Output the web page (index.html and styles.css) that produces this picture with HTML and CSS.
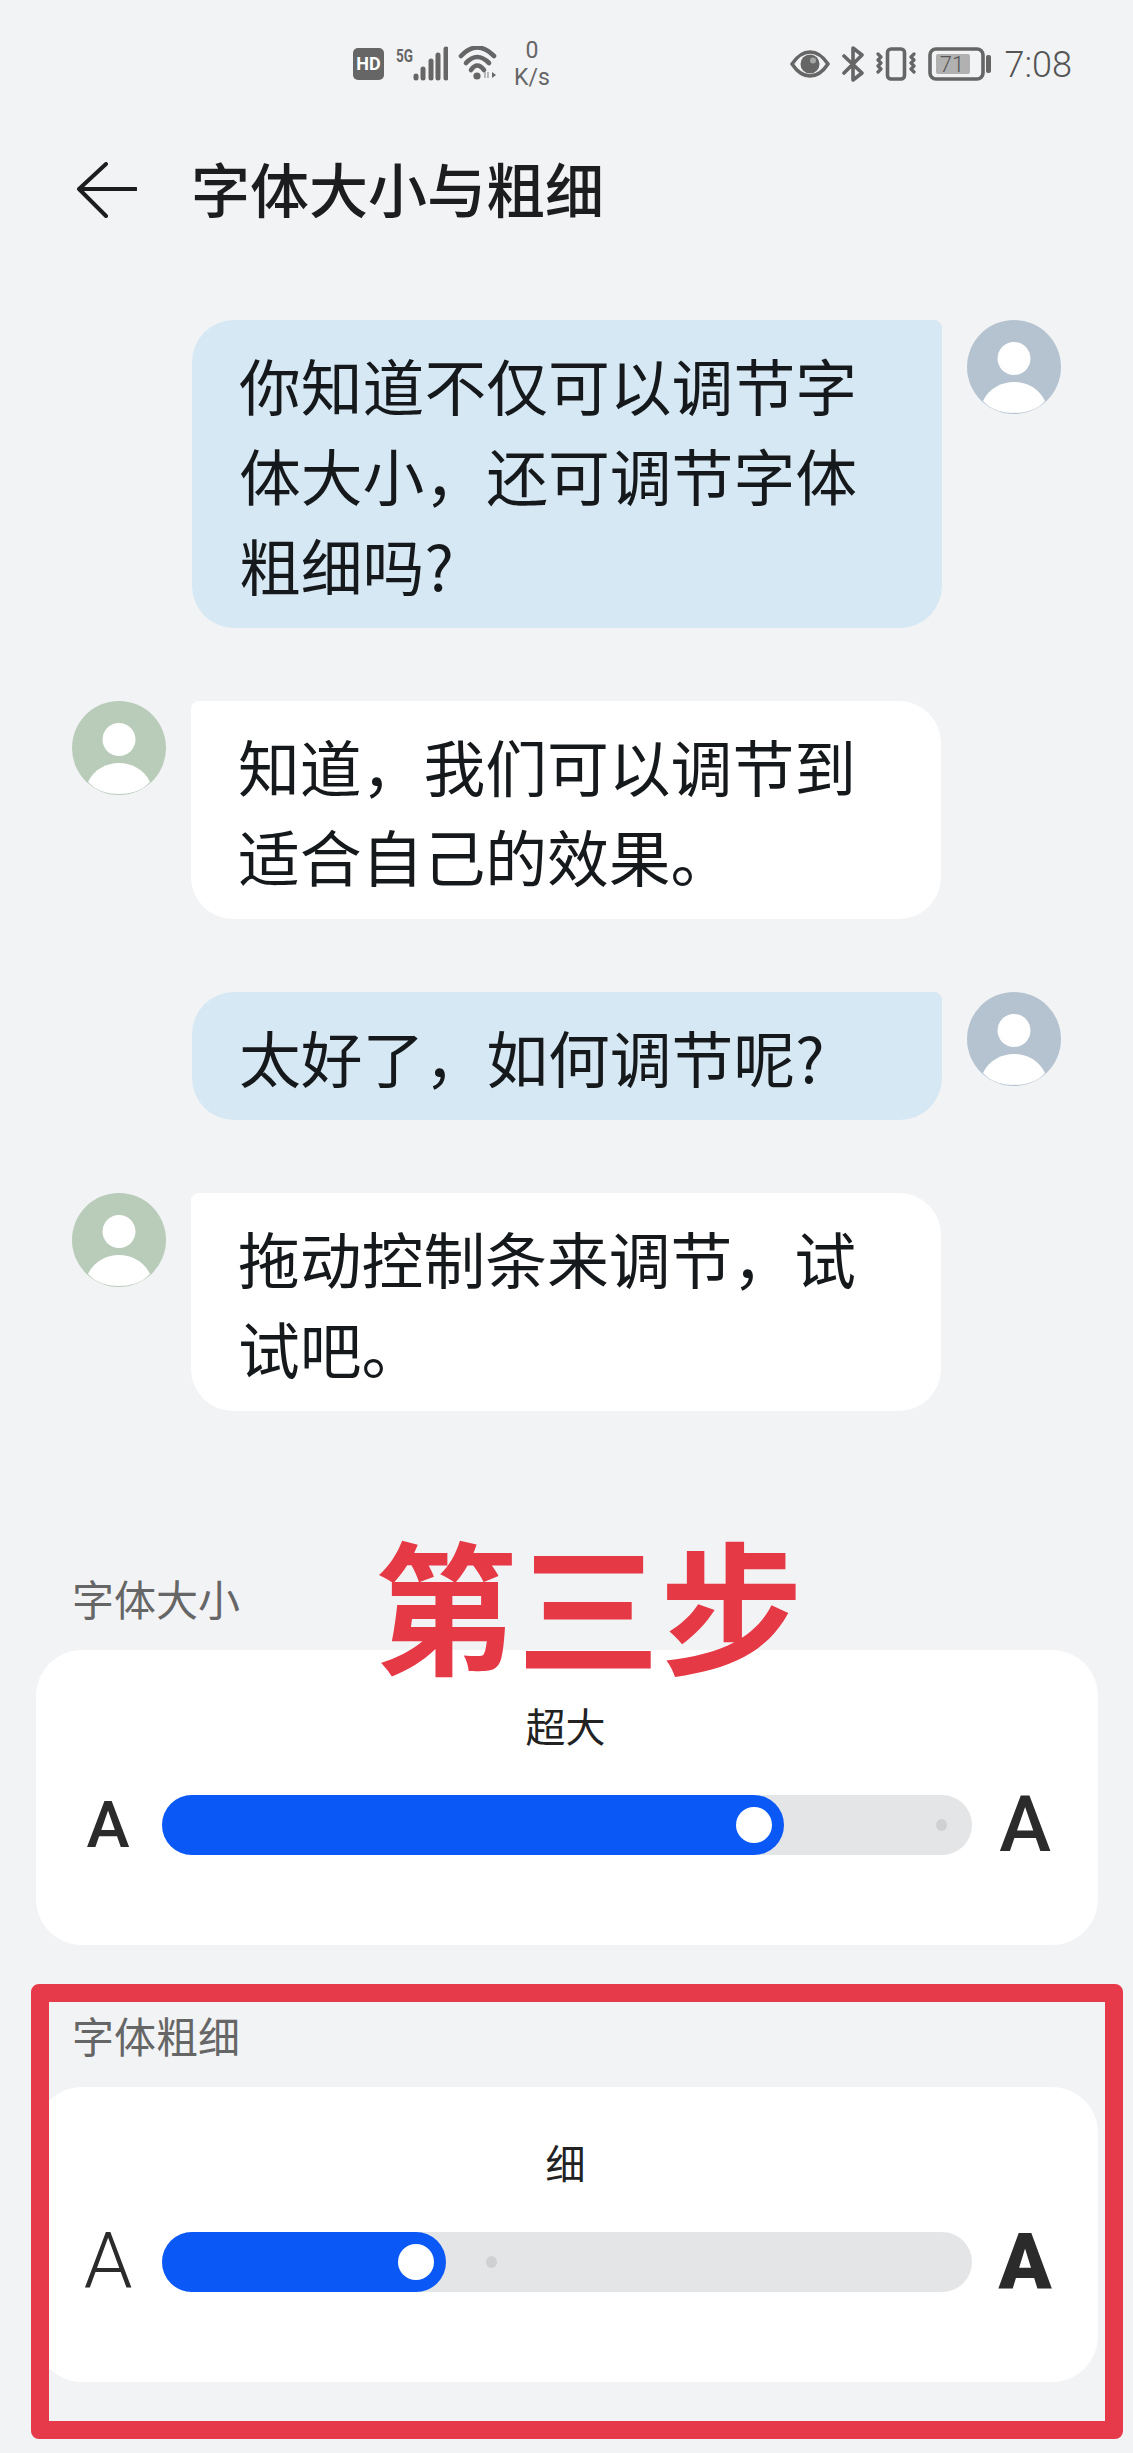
FILE: index.html
```html
<!DOCTYPE html>
<html lang="zh-CN">
<head>
<meta charset="utf-8">
<title>字体大小与粗细</title>
<link rel="stylesheet" href="styles.css">
</head>
<body>
<div class="page">
  <header class="status">
    <div class="status-group">
      <span class="hd">HD</span>
      <svg class="ic-signal" viewBox="0 -2 52 40" width="52" height="40">
        <text x="0" y="16" class="five-g" textLength="17" lengthAdjust="spacingAndGlyphs">5G</text>
        <g class="bars"><path d="M20 30v2"/><path d="M27 23v9"/><path d="M35 15v17"/><path d="M42 9v23"/><path d="M50 3v29"/></g>
      </svg>
      <svg class="ic-wifi" viewBox="0 0 40 36" width="40" height="36">
        <g class="wifi-arcs"><path d="M3 10Q19-7 36 10"/><path d="M8 17Q19 5 31 17"/><path d="M13 24Q19 15 26 24"/></g>
        <circle cx="19" cy="30" r="3.6" class="ic-fill"/>
        <path d="M27 26v6M30 26v6" class="wifi-mini"/>
        <path d="M34 26l4 3-4 3z" class="ic-fill"/>
      </svg>
      <div class="speed"><span>0</span><span>K/s</span></div>
    </div>
    <div class="status-group status-right">
      <svg class="ic-eye" viewBox="0 0 40 28" width="40" height="28">
        <path d="M2 14C8 5 14 2 20 2s12 3 18 12c-6 9-12 12-18 12S8 23 2 14z" class="ic-line"/>
        <circle cx="20" cy="14" r="9.5" class="ic-fill"/>
        <circle cx="23" cy="10.5" r="3" class="eye-glint"/>
      </svg>
      <svg class="ic-bt" viewBox="0 0 22 36" width="22" height="36">
        <path d="M2 10L20 27 11 34V2L20 9 2 27" class="ic-line"/>
      </svg>
      <svg class="ic-vib" viewBox="0 0 40 34" width="40" height="34">
        <rect x="11.5" y="2" width="17" height="30" rx="3.5" class="ic-line"/>
        <path d="M2 7l3 3-3 3 3 3-3 3 3 3-3 3" class="ic-thin"/>
        <path d="M38 7l-3 3 3 3-3 3 3 3-3 3 3 3" class="ic-thin"/>
      </svg>
      <svg class="ic-batt" viewBox="0 0 64 34" width="64" height="34">
        <rect x="2" y="2" width="53" height="30" rx="6" class="ic-line"/>
        <rect x="8" y="7" width="34" height="20" rx="2" class="batt-level"/>
        <text x="24" y="25" class="batt-text">71</text>
        <rect x="58" y="8" width="5" height="18" rx="2" class="ic-fill"/>
      </svg>
      <span class="time">7:08</span>
    </div>
  </header>

  <div class="topbar">
    <svg class="back" viewBox="0 0 60 56" width="60" height="56">
      <path d="M29 2L2 27 29 54M2 27H59"/>
    </svg>
    <h1 class="title">字体大小与粗细</h1>
  </div>

  <main class="chat">
    <div class="row row-me">
      <div class="bubble bubble-me">你知道不仅可以调节字体大小，还可调节字体粗细吗?</div>
      <svg class="avatar avatar-me" viewBox="0 0 94 94" width="94" height="94"><circle cx="47" cy="47" r="47" class="avatar-bg"/><circle cx="47" cy="38.5" r="16.5" class="avatar-fg"/><path d="M16 81C22 68 35 62 47 62S72 68 78 81C70 90 58 93 47 93S24 90 16 81Z" class="avatar-fg"/></svg>
    </div>
    <div class="row">
      <svg class="avatar avatar-other" viewBox="0 0 94 94" width="94" height="94"><circle cx="47" cy="47" r="47" class="avatar-bg"/><circle cx="47" cy="38.5" r="16.5" class="avatar-fg"/><path d="M16 81C22 68 35 62 47 62S72 68 78 81C70 90 58 93 47 93S24 90 16 81Z" class="avatar-fg"/></svg>
      <div class="bubble bubble-other">知道，我们可以调节到适合自己的效果。</div>
    </div>
    <div class="row row-me">
      <div class="bubble bubble-me">太好了，如何调节呢?</div>
      <svg class="avatar avatar-me" viewBox="0 0 94 94" width="94" height="94"><circle cx="47" cy="47" r="47" class="avatar-bg"/><circle cx="47" cy="38.5" r="16.5" class="avatar-fg"/><path d="M16 81C22 68 35 62 47 62S72 68 78 81C70 90 58 93 47 93S24 90 16 81Z" class="avatar-fg"/></svg>
    </div>
    <div class="row">
      <svg class="avatar avatar-other" viewBox="0 0 94 94" width="94" height="94"><circle cx="47" cy="47" r="47" class="avatar-bg"/><circle cx="47" cy="38.5" r="16.5" class="avatar-fg"/><path d="M16 81C22 68 35 62 47 62S72 68 78 81C70 90 58 93 47 93S24 90 16 81Z" class="avatar-fg"/></svg>
      <div class="bubble bubble-other">拖动控制条来调节，试试吧。</div>
    </div>
  </main>

  <section class="settings">
    <h2 class="label">字体大小</h2>
    <div class="card">
      <div class="caption">超大</div>
      <div class="slider-row">
        <span class="glyph glyph-s-medium">A</span>
        <div class="track">
          <span class="dot dot-size"></span>
          <div class="fill" style="width:622px"><span class="thumb"></span></div>
        </div>
        <span class="glyph glyph-l-medium">A</span>
      </div>
    </div>

    <h2 class="label label-second">字体粗细</h2>
    <div class="card">
      <div class="caption">细</div>
      <div class="slider-row">
        <span class="glyph glyph-l-thin">A</span>
        <div class="track">
          <span class="dot dot-weight"></span>
          <div class="fill" style="width:284px"><span class="thumb"></span></div>
        </div>
        <span class="glyph glyph-l-black">A</span>
      </div>
    </div>
  </section>

  <div class="step-note">第三步</div>
  <div class="highlight-frame"></div>
</div>
</body>
</html>
```

FILE: styles.css
```css
* { box-sizing: border-box; }
html, body { margin: 0; padding: 0; }
body { background: #f2f3f5; }

.page {
  position: relative;
  width: 1133px;
  height: 2453px;
  overflow: hidden;
  background: #f2f3f5;
  font-family: "Noto Sans CJK SC", "Noto Sans", sans-serif;
  color: #1b1d1f;
}

/* status bar */
.status {
  height: 128px;
  padding: 0 61px 0 353px;
  display: flex;
  align-items: center;
  justify-content: space-between;
  font-family: Roboto, "Liberation Sans", sans-serif;
  color: #666;
}
.status-group { display: flex; align-items: center; }
.hd {
  width: 31px;
  height: 32px;
  margin-right: 12px;
  border-radius: 5px;
  background: #666;
  color: #fff;
  font-size: 18px;
  font-weight: 700;
  line-height: 32px;
  text-align: center;
}
.ic-signal { margin-right: 10px; }
.five-g { font-family: Roboto, sans-serif; font-size: 19px; font-weight: 700; fill: #666; }
.bars path { stroke: #666; stroke-width: 5; stroke-linecap: round; fill: none; }
.wifi-arcs path { stroke: #666; stroke-width: 4.6; stroke-linecap: round; fill: none; }
.wifi-mini { stroke: #aaa; stroke-width: 1.6; fill: none; }
.ic-fill { fill: #666; }
.speed {
  width: 40px;
  margin-left: 14px;
  display: flex;
  flex-direction: column;
  align-items: center;
  font-size: 23px;
  line-height: 27px;
  font-weight: 400;
  color: #666;
}
.ic-line { fill: none; stroke: #666; stroke-width: 3.6; stroke-linejoin: round; stroke-linecap: round; }
.ic-thin { fill: none; stroke: #666; stroke-width: 3.2; stroke-linejoin: round; stroke-linecap: round; }
.eye-glint { fill: #f2f3f5; opacity: .45; }
.ic-eye, .ic-bt, .ic-vib { margin-right: 12px; }
.ic-batt { margin-right: 13px; }
.batt-level { fill: #b1b1b1; }
.batt-text { font-family: Roboto, sans-serif; font-size: 22px; font-weight: 300; fill: #555; text-anchor: middle; }
.time { margin-top: 2px; font-size: 36px; font-weight: 300; line-height: 40px; color: #555; }

/* title bar */
.topbar {
  height: 124px;
  padding-left: 77px;
  display: flex;
  align-items: center;
  gap: 54px;
}
.back path { fill: none; stroke: #1b1d1f; stroke-width: 4; stroke-linecap: round; stroke-linejoin: round; }
.title { margin: -5px 0 0; font-size: 59px; font-weight: 500; line-height: 70px; }

/* chat */
.chat {
  margin-top: 68px;
  padding: 0 72px;
  display: flex;
  flex-direction: column;
  gap: 73px;
}
.row { display: flex; align-items: flex-start; gap: 25px; }
.row-me { justify-content: flex-end; }
.avatar { flex: none; }
.avatar-fg { fill: #fff; }
.avatar-me .avatar-bg { fill: #b5c3d1; }
.avatar-other .avatar-bg { fill: #b9cbb9; }
.bubble {
  width: 750px;
  padding: 19px 45px 19px 47px;
  font-size: 61.8px;
  line-height: 90px;
  color: #15191c;
  border-radius: 42px;
}
.bubble-me { background: #d6e8f3; border-top-right-radius: 8px; }
.bubble-other { background: #fff; border-top-left-radius: 8px; }

/* settings */
.settings { margin-top: 162px; padding: 0 35px 0 36px; }
.label {
  margin: 0 0 27px;
  padding-left: 36px;
  font-size: 42px;
  font-weight: 400;
  line-height: 50px;
  color: #666;
}
.label-second { margin-top: 65px; }
.card {
  height: 295px;
  padding: 50px 3px 0 0;
  background: #fff;
  border-radius: 46px;
}
.caption {
  font-size: 40px;
  line-height: 50px;
  text-align: center;
  color: #222;
}
.slider-row {
  margin-top: 45px;
  padding: 0 17px 0 18px;
  display: grid;
  grid-template-columns: 108px 810px 106px;
  align-items: center;
}
.glyph {
  font-family: Roboto, "Liberation Sans", sans-serif;
  line-height: 60px;
  height: 60px;
  text-align: center;
  color: #2b2b2b;
}
.glyph-s-medium { font-size: 65px; font-weight: 500; }
.glyph-l-medium { font-size: 78px; font-weight: 500; }
.glyph-l-thin { font-size: 78px; font-weight: 300; }
.glyph-l-black { font-size: 78px; font-weight: 900; }
.track {
  position: relative;
  height: 60px;
  border-radius: 30px;
  background: #e4e5e7;
}
.fill {
  position: relative;
  height: 60px;
  border-radius: 30px;
  background: #0a59f7;
}
.thumb {
  position: absolute;
  top: 12px;
  right: 12px;
  width: 36px;
  height: 36px;
  border-radius: 50%;
  background: #fff;
}
.dot {
  position: absolute;
  top: 24px;
  width: 11px;
  height: 12px;
  border-radius: 50%;
  background: #cfd0d2;
}
.dot-size { left: 774px; }
.dot-weight { left: 324px; }

/* annotations laid over the screenshot */
.step-note {
  position: absolute;
  left: 374px;
  top: 1530px;
  font-size: 143px;
  font-weight: 700;
  line-height: 144px;
  white-space: nowrap;
  color: #e63946;
}
.highlight-frame {
  position: absolute;
  left: 31px;
  top: 1984px;
  width: 1092px;
  height: 455px;
  border: 18.5px solid #e63a4a;
  border-radius: 8px;
}
```
